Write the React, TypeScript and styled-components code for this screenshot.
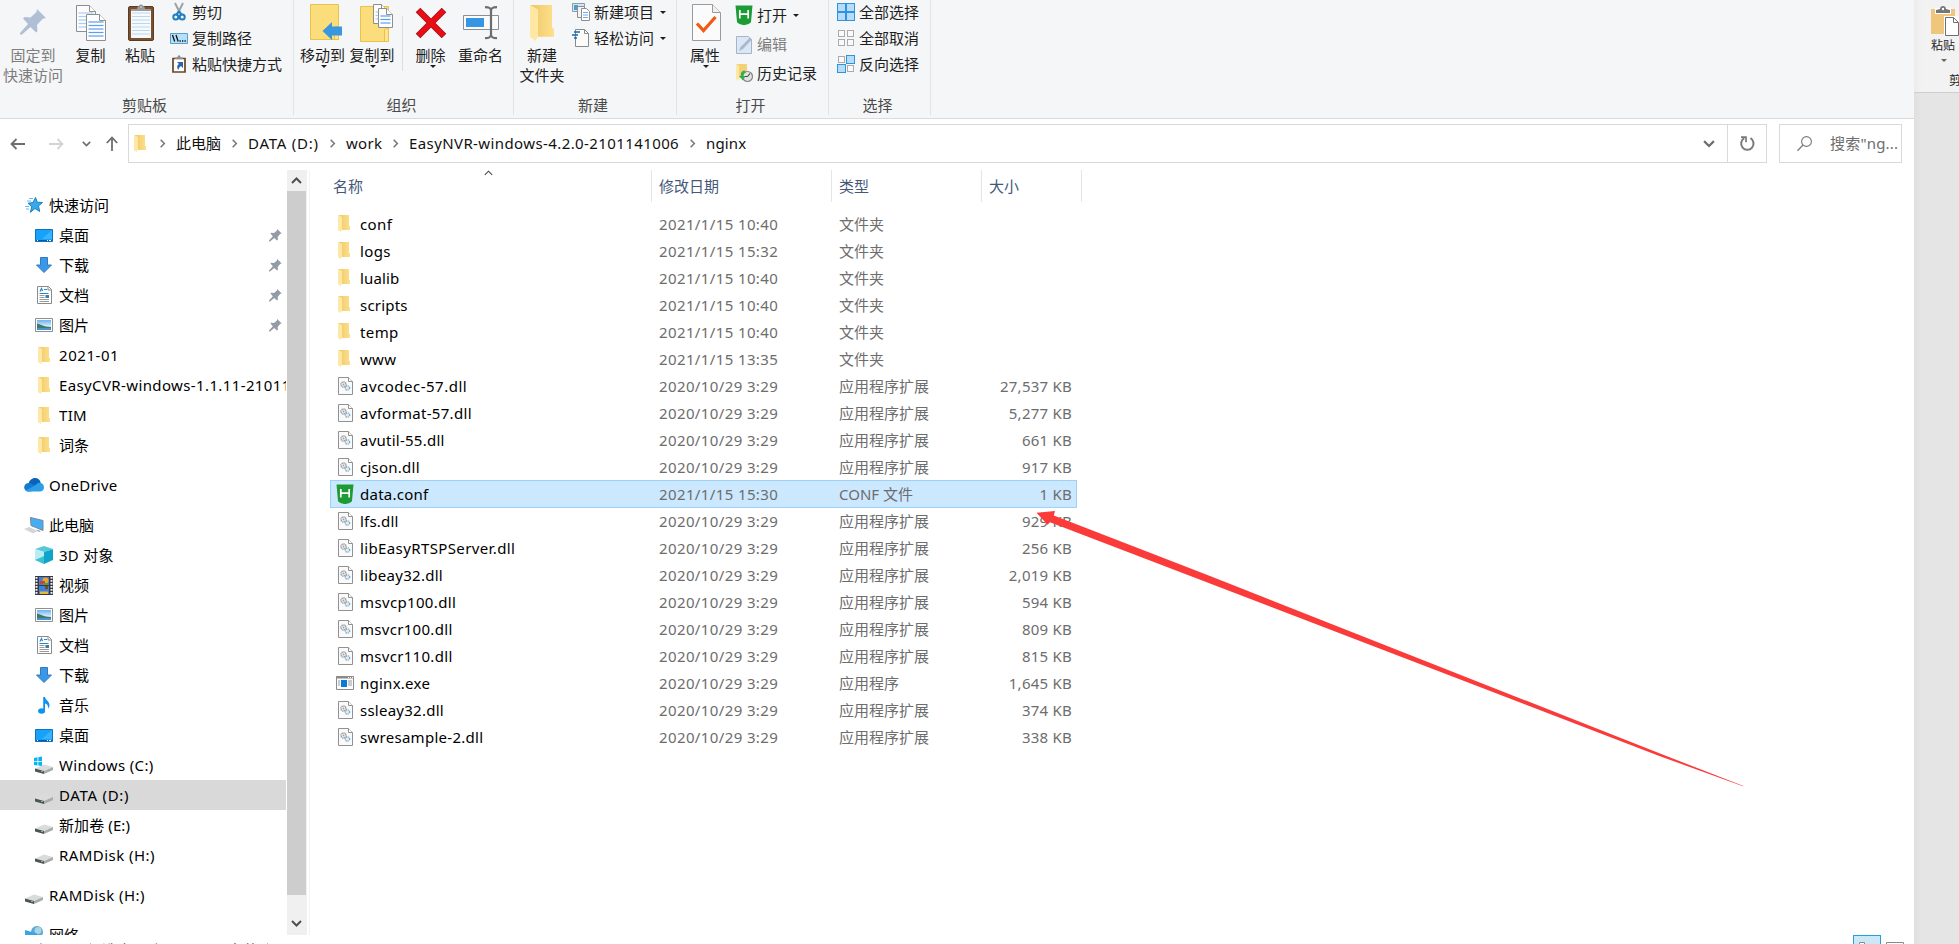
import React from 'react';
import styled, { createGlobalStyle } from 'styled-components';

const GlobalStyle = createGlobalStyle`
  *, *::before, *::after { box-sizing: border-box; }
  body { margin: 0; overflow: hidden; background: #fff; }
  svg { display: block; flex: none; overflow: visible; }
`;

const Screen = styled.div`
  position: relative;
  display: flex;
  width: 1959px;
  height: 944px;
  overflow: hidden;
  font-family: 'Noto Sans', 'Noto Sans CJK SC', sans-serif;
  font-size: 15px;
  line-height: 20px;
  color: #000;
  white-space: nowrap;
`;

const Explorer = styled.div`
  display: flex;
  flex-direction: column;
  width: 1914px;
  height: 944px;
  background: #fff;
  overflow: hidden;
`;

/* ---------- ribbon ---------- */

const Ribbon = styled.div`
  display: flex;
  flex: none;
  height: 119px;
  background: #f5f6f7;
  border-bottom: 1px solid #dadbdc;
`;

const Group = styled.div<{ $w: number }>`
  display: flex;
  flex-direction: column;
  width: ${(p) => p.$w}px;
  height: 115px;
  border-right: 1px solid #e2e3e4;
`;

const GroupBody = styled.div<{ $pad: number }>`
  display: flex;
  height: 95px;
  padding-left: ${(p) => p.$pad}px;
`;

const GroupLabel = styled.div`
  height: 20px;
  padding-right: 4px;
  text-align: center;
  color: #4a4a4a;
`;

const BigButton = styled.div<{ $w: number; $disabled?: boolean }>`
  display: flex;
  flex-direction: column;
  align-items: center;
  flex: none;
  width: ${(p) => p.$w}px;
  color: ${(p) => (p.$disabled ? '#7d7d7d' : '#1e1e1e')};
  text-align: center;
`;

const BigIcon = styled.div<{ $shift?: number }>`
  display: flex;
  align-items: center;
  justify-content: center;
  height: 45px;
  padding-left: ${(p) => p.$shift ?? 0}px;
`;

const SmallColumn = styled.div<{ $ml: number; $top?: number; $gap?: number }>`
  display: flex;
  flex-direction: column;
  gap: ${(p) => p.$gap ?? 6}px;
  margin-left: ${(p) => p.$ml}px;
  padding-top: ${(p) => p.$top ?? 2}px;
`;

const SmallButton = styled.div<{ $disabled?: boolean }>`
  display: flex;
  align-items: center;
  gap: 4px;
  height: 20px;
  color: ${(p) => (p.$disabled ? '#7d7d7d' : '#1e1e1e')};
`;

const Caret = styled.i<{ $ml?: number; $mt?: number; $small?: boolean }>`
  width: 0;
  height: 0;
  margin-left: ${(p) => p.$ml ?? 0}px;
  margin-top: ${(p) => p.$mt ?? 0}px;
  border: 3px solid transparent;
  border-top-color: ${(p) => (p.$small ? '#666' : '#1e1e1e')};
  border-bottom: 0;
`;

const Divider = styled.div`
  width: 1px;
  height: 55px;
  margin-top: 16px;
  background: #dcdddd;
`;

/* ---------- address bar ---------- */

const NavBar = styled.div`
  display: flex;
  flex: none;
  height: 51px;
  padding: 5px 12px 7px 0;
`;

const NavButtons = styled.div`
  display: flex;
  align-items: center;
  width: 128px;
  padding-left: 10px;
`;

const AddressBox = styled.div`
  display: flex;
  align-items: center;
  width: 1639px;
  border: 1px solid #d9d9d9;
  padding-left: 5px;
`;

const Crumb = styled.span<{ $w: number; $ls: number }>`
  width: ${(p) => p.$w}px;
  margin: 0 11px 2px;
  color: #111;
  letter-spacing: ${(p) => p.$ls}px;
`;

const AddressEnd = styled.div`
  display: flex;
  align-items: center;
  height: 37px;
  margin-left: auto;
`;

const RefreshCell = styled.div`
  display: flex;
  align-items: center;
  justify-content: center;
  width: 39px;
  height: 37px;
  margin-left: 12px;
  border-left: 1px solid #d9d9d9;
`;

const SearchBox = styled.div`
  display: flex;
  align-items: center;
  gap: 18px;
  width: 123px;
  margin-left: 12px;
  padding: 0 0 1px 17px;
  border: 1px solid #d9d9d9;
  color: #6d6d6d;
  letter-spacing: 0.2px;
`;

/* ---------- body ---------- */

const Body = styled.div`
  display: flex;
  flex: none;
  height: 765px;
`;

const Sidebar = styled.div`
  width: 286px;
  height: 765px;
  padding-top: 20px;
  overflow: hidden;
`;

const TreeSection = styled.div`
  margin-bottom: 10px;
`;

const TreeRow = styled.div<{ $root?: boolean; $selected?: boolean }>`
  display: flex;
  align-items: center;
  height: 30px;
  padding-left: ${(p) => (p.$root ? 23 : 33)}px;
  background: ${(p) => (p.$selected ? '#d9d9d9' : 'transparent')};
`;

const TreeIcon = styled.span`
  display: flex;
  justify-content: center;
  flex: none;
  width: 22px;
  margin-right: 4px;
`;

const TreeLabel = styled.span<{ $ls?: number }>`
  flex: 1;
  overflow: hidden;
  margin-bottom: 1px;
  letter-spacing: ${(p) => p.$ls ?? 0}px;
`;

const PinSlot = styled.span`
  flex: none;
  margin-right: 4px;
`;

const Scrollbar = styled.div`
  display: flex;
  flex-direction: column;
  width: 20px;
  margin-left: 1px;
  background: #f0f0f0;
`;

const ScrollButton = styled.div<{ $h: number; $top?: number }>`
  display: flex;
  align-items: center;
  justify-content: center;
  flex: none;
  width: 19px;
  height: ${(p) => p.$h}px;
  padding-top: ${(p) => p.$top ?? 0}px;
`;

const Thumb = styled.div`
  flex: none;
  width: 19px;
  height: 704px;
  background: #cdcdcd;
`;

const Files = styled.div`
  flex: 1;
  margin-left: 2px;
  padding-left: 20px;
  border-left: 1px solid #f2f2f2;
`;

const HeaderRow = styled.div`
  display: flex;
  height: 32px;
  margin-bottom: 8px;
  color: #44597a;
`;

const HeaderCell = styled.div<{ $w: number; $pad?: number }>`
  position: relative;
  width: ${(p) => p.$w}px;
  padding: 6px 0 0 ${(p) => p.$pad ?? 7}px;
  border-right: 1px solid #e5e5e5;
`;

const SortMark = styled.span`
  position: absolute;
  top: 0;
  left: 154px;
`;

const FileRow = styled.div<{ $selected?: boolean }>`
  display: flex;
  align-items: center;
  width: 747px;
  height: ${(p) => (p.$selected ? 28 : 27)}px;
  margin-bottom: ${(p) => (p.$selected ? -1 : 0)}px;
  padding-bottom: ${(p) => (p.$selected ? 1 : 0)}px;
  background: ${(p) => (p.$selected ? '#cce8ff' : 'transparent')};
  box-shadow: ${(p) => (p.$selected ? 'inset 0 0 0 1px #99d1ff' : 'none')};
  color: #6d6d6d;
`;

const FileIcon = styled.span<{ $narrow: boolean }>`
  flex: none;
  width: 18px;
  margin: 0 6px;
  padding-left: ${(p) => (p.$narrow ? 2 : 0)}px;
`;

const FileName = styled.span<{ $ls: number }>`
  width: 299px;
  color: #000;
  letter-spacing: ${(p) => p.$ls}px;
`;

const FileDate = styled.span`
  width: 180px;
  letter-spacing: 0.38px;
`;

const FileType = styled.span`
  width: 130px;
`;

const FileSize = styled.span`
  width: 103px;
  text-align: right;
  letter-spacing: 0.24px;
`;

/* ---------- status bar ---------- */

const StatusBar = styled.div`
  display: flex;
  flex: none;
  align-items: flex-start;
  height: 9px;
  overflow: hidden;
  color: #1e395b;
`;

const StatusText = styled.span<{ $ml: number; $w: number }>`
  width: ${(p) => p.$w}px;
  margin: 5px 0 0 ${(p) => p.$ml}px;
`;

const StatusSep = styled.span`
  width: 1px;
  height: 9px;
  margin-top: 8px;
  background: #b8c0c8;
`;

const ViewButton = styled.div<{ $active?: boolean }>`
  display: flex;
  justify-content: center;
  width: 28px;
  height: 20px;
  border: ${(p) => (p.$active ? '1px solid #26a0da' : '0')};
  background: ${(p) => (p.$active ? '#cce8f6' : 'transparent')};
  padding-top: ${(p) => (p.$active ? 6 : 7)}px;
`;

const ViewButtons = styled.div`
  display: flex;
  margin-left: auto;
  padding-right: 5px;
`;

/* ---------- second window at the right edge ---------- */

const OtherWindow = styled.div`
  width: 45px;
  height: 944px;
  background: linear-gradient(90deg, #e0e0e0, #e5e5e5 8px);
  overflow: hidden;
`;

const OtherRibbon = styled.div`
  display: flex;
  flex-direction: column;
  height: 93px;
  padding: 6px 0 0 17px;
  border-bottom: 1px solid #cfcfcf;
  background: linear-gradient(90deg, #ececec, #f2f2f2 8px);
  font-size: 12px;
  line-height: 16px;
  color: #262626;
`;

const OtherLabel = styled.span<{ $mt: number; $ml?: number }>`
  margin: ${(p) => p.$mt}px 0 0 ${(p) => p.$ml ?? 0}px;
`;

const ArrowOverlay = styled.svg`
  position: absolute;
  top: 500px;
  left: 1020px;
  pointer-events: none;
`;

/* ---------- icons ---------- */

const FolderIcon = ({ w = 12, h = 17 }: { w?: number; h?: number }) => (
  <svg width={w} height={h} viewBox="0 0 12 17" preserveAspectRatio="none">
    <defs>
      <linearGradient id="fold" x1="0" x2="1">
        <stop offset="0" stopColor="#efc768" />
        <stop offset="1" stopColor="#fde08a" />
      </linearGradient>
    </defs>
    <path d="M0 0h11v11h1v4H3V2L0 0z" fill="url(#fold)" />
    <path d="M0 0l3.3 1.8c.5.3.7.7.7 1.2V15l-1.4 2L0 15z" fill="#ffe8a3" />
  </svg>
);

const BigFolder = () => (
  <>
    <path d="M.5.5h28v35H.5z" fill="#fbdd7c" stroke="#e9c14d" />
    <path d="M24.5 35.500v-11.500c0-2 4-2 4 0v11.500z" fill="#ffe48f" stroke="#e9c14d" />
  </>
);

const BluePage = ({ x = 0, y = 0, w = 20, h = 27, light = false }: { x?: number; y?: number; w?: number; h?: number; light?: boolean }) => {
  const lines: number[] = [];
  for (let ly = 8; ly < h - 2; ly += 3.5) lines.push(ly);
  return (
    <g transform={`translate(${x} ${y})`}>
      <path d={`M.5.5H${w - 6.5}L${w - 0.5} 6.5V${h - 0.5}H.5z`} fill="#fdfdfe" stroke="#8e8e8e" />
      <path d={`M${w - 6.5}.5v6h6`} fill="#fff" stroke="#8e8e8e" />
      {lines.map((ly) => (
        <path key={ly} d={`M2.5 ${ly}H${w - 2.5}`} stroke={light ? '#a9cdf5' : '#5c9ff0'} strokeWidth="1.2" />
      ))}
    </g>
  );
};

const BigPin = () => (
  <svg width="27" height="27" viewBox="0 0 27 27">
    <path d="M17 0L26 9l-2.500.5-1 .5-5.500 6 .5 6-1.500 1.500-5.500-5.500L2 25.500H0V24l8-9L3 9.500 4.500 8l6 .5 6-5.500z" fill="#b1bfd4" />
  </svg>
);

const SmallPin = () => (
  <svg width="13" height="13" viewBox="0 0 27 27">
    <path d="M17 0L26.500 9.500l-2.500.5-1 .5-5 6 .5 6-2 1.500-5.500-5.500L2 26H0V24l8-9L3 9.500 4.500 8l6 .5 6-5.500z" fill="#929ba6" />
  </svg>
);

const CopyIcon = () => (
  <svg width="30" height="36">
    <BluePage light />
    <BluePage x={10} y={9} />
  </svg>
);

const PasteIcon = () => (
  <svg width="26" height="37" viewBox="0 0 26 37">
    <rect x=".5" y="2.5" width="25" height="34" rx="1.5" fill="#795130" stroke="#5d3b20" />
    <path d="M3 6h20v28H3z" fill="#f7fafd" />
    <path d="M4 9h18M4 12.500h18M4 16h18M4 19.500h18M4 23h18M4 26.500h18M4 30h18" stroke="#bcd6ec" />
    <path d="M3 7V5h6c0-5 8-5 8 0h6v2z" fill="#9b9b9b" />
    <circle cx="13" cy="2.5" r="2" fill="#8c8c8c" />
    <circle cx="13" cy="3" r=".8" fill="#fff" />
  </svg>
);

const CutIcon = () => (
  <svg width="18" height="18" viewBox="0 0 18 18">
    <path d="M5 0l5.500 11M13 0L7.500 11" stroke="#9ba3aa" strokeWidth="2" fill="none" />
    <path d="M9 8l-3 4M9 8l3 4" stroke="#1c7fc0" strokeWidth="1.8" />
    <circle cx="5.8" cy="14" r="2.5" fill="none" stroke="#1c7fc0" strokeWidth="2" />
    <circle cx="12.2" cy="14" r="2.5" fill="none" stroke="#1c7fc0" strokeWidth="2" />
  </svg>
);

const PathIcon = () => (
  <svg width="18" height="11" viewBox="0 0 18 11">
    <path d="M.5.5h17v10H.5z" fill="#b3e0fb" stroke="#5f9dc5" />
    <path d="M2.500 2l2.200 6.500M6 2l2.200 6.500" stroke="#111" strokeWidth="1.3" />
    <path d="M9.500 8h1.300M12 8h1.300M14.500 8h1.300" stroke="#111" strokeWidth="1.3" />
  </svg>
);

const ShortcutIcon = () => (
  <svg width="18" height="18" viewBox="0 0 18 18">
    <path d="M3 3.500h12v13.500H3z" fill="#fff" stroke="#6b4526" strokeWidth="1.7" />
    <path d="M5 4V2.500h2.500c0-3 3-3 3 0H13V4z" fill="#8c8c8c" />
    <path d="M7 7h6v6l-2-2c-1.500 1-2.500 2-2.500 4-2-2-1.500-5 .5-6z" fill="#2b62ac" />
  </svg>
);

const MoveToIcon = () => (
  <svg width="32" height="37">
    <BigFolder />
    <path d="M12.500 27l9.500-9v4.500h10v9H22V36z" fill="#3a96dd" />
  </svg>
);

const CopyToIcon = () => (
  <svg width="34" height="38">
    <g transform="translate(0 2)"><BigFolder /></g>
    <BluePage x={13} y={0} w={15} h={20} light />
    <BluePage x={18} y={4} w={15} h={20} />
  </svg>
);

const DeleteIcon = () => (
  <svg width="32" height="32" viewBox="0 0 32 32">
    <path d="M3 3l26 26M29 3L3 29" stroke="#a01219" strokeWidth="6.5" />
    <path d="M3.500 3.500l25 25M28.500 3.500l-25 25" stroke="#e80c14" strokeWidth="5" />
  </svg>
);

const RenameIcon = () => (
  <svg width="36" height="34" viewBox="0 0 36 34">
    <path d="M.5 9.500h35v14H.5z" fill="#fbfbfb" stroke="#8b8f95" />
    <path d="M3 12h18v9H3z" fill="#3596e4" />
    <path d="M22 1.200c4 0 6 .5 6 4v23c0 3.500-2 4-6 4M34 1.200c-4 0-6 .5-6 4v23c0 3.500 2 4 6 4" fill="none" stroke="#6e6e6e" strokeWidth="2.2" />
  </svg>
);

const NewItemIcon = () => (
  <svg width="18" height="18" viewBox="0 0 18 18">
    <path d="M.5.5h12v8H.5z" fill="#cde9f7" stroke="#8f9ba5" />
    <path d="M2 2h4v5H2z" fill="#4b9fd0" />
    <path d="M5.500 3.500h7v11h-7z" fill="#f4f4f4" stroke="#8e8e8e" />
    <path d="M9.500 5.500h5l3 3v9h-8z" fill="#fff" stroke="#8e8e8e" />
    <path d="M11 9.500h5M11 12h5M11 14.500h5" stroke="#6faaf0" />
  </svg>
);

const EasyAccessIcon = () => (
  <svg width="18" height="18" viewBox="0 0 18 18">
    <path d="M3.500.5h9l4 4v13h-13z" fill="#fcfcfc" stroke="#8a8a8a" />
    <path d="M12.500.5v4h4" fill="none" stroke="#8a8a8a" />
    <path d="M2 3h6M0 6h6M2 9h3" stroke="#1566b0" strokeWidth="1.7" />
  </svg>
);

const PropertiesIcon = () => (
  <svg width="29" height="37" viewBox="0 0 29 37">
    <path d="M.5.5h20l8 8v28H.5z" fill="#fbfbfc" stroke="#9a9a9a" />
    <path d="M20.500.5v8h8" fill="#f0f0f0" stroke="#9a9a9a" />
    <path d="M5 19.500l6.500 7L23.500 13" stroke="#f05a12" strokeWidth="3.2" fill="none" />
  </svg>
);

const HBuilderIcon = () => (
  <svg width="18" height="20" viewBox="0 0 18 20">
    <path d="M.5.5h17L16 17c-1 2-5 3-7 3s-6-1-7-3z" fill="#1d9b35" />
    <path d="M4.800 5v8.500M13.200 5v8.500M4.800 9.200h8.400" stroke="#fff" strokeWidth="1.7" />
  </svg>
);

const EditIcon = () => (
  <svg width="18" height="19" viewBox="0 0 18 19">
    <path d="M1.500 1.500h12l3 3v14h-15z" fill="#dde6f3" stroke="#a3b4d0" />
    <path d="M4 16l1.500-4L15 2.500l2 2L8 14z" fill="#a9b9d4" />
  </svg>
);

const HistoryIcon = () => (
  <svg width="18" height="18" viewBox="0 0 18 18">
    <path d="M1 0h11v14H4V2z" fill="#f4d176" />
    <path d="M1 0l3 2v13l-1.500 2L1 15z" fill="#ffe8a3" />
    <circle cx="12.5" cy="12.5" r="5" fill="#e3e3e3" stroke="#858585" strokeWidth="1.2" />
    <path d="M12.500 12.500l2.500-3M12.500 12.500h-2.500" stroke="#444" strokeWidth="1.1" />
    <path d="M9.500 6.500C6 7 5.500 10 6 12H4l4 4.500 2.500-4.500H8.500c-.3-2 .5-3 2.500-3.500z" fill="#31b04a" />
  </svg>
);

const SelectIcon = ({ on }: { on: boolean[] }) => (
  <svg width="18" height="18" viewBox="0 0 18 18">
    {on.map((active, i) => {
      const size = active ? 8 : 6;
      const x = (i % 2) * 9 + (active ? 0.5 : 1.5);
      const y = Math.floor(i / 2) * 9 + (active ? 0.5 : 1.5);
      return (
        <rect key={i} x={x} y={y} width={size} height={size} fill={active ? '#b6dcfa' : '#fafafa'} stroke={active ? '#2f93e0' : '#ababab'} />
      );
    })}
  </svg>
);

const Chevron = () => (
  <svg width="5" height="9" viewBox="0 0 5 9">
    <path d="M.7.7L4.300 4.500.7 8.300" fill="none" stroke="#7a7a7a" strokeWidth="1.6" />
  </svg>
);

const DownChevron = ({ w = 11, color = '#6e6e6e', up = false, sw = 2 }: { w?: number; color?: string; up?: boolean; sw?: number }) => (
  <svg width={w} height={w * 0.64} viewBox="0 0 11 7">
    <path d={up ? 'M1 6l4.500-4.500L10 6' : 'M1 1l4.500 4.500L10 1'} fill="none" stroke={color} strokeWidth={sw} />
  </svg>
);

const BackArrow = () => (
  <svg width="15" height="12" viewBox="0 0 15 12">
    <path d="M15 6H1.500M6.500 1l-5 5 5 5" fill="none" stroke="#6e6e6e" strokeWidth="1.8" />
  </svg>
);

const ForwardArrow = () => (
  <svg width="15" height="12" viewBox="0 0 15 12">
    <path d="M0 6h13.500M8.500 1l5 5-5 5" fill="none" stroke="#d4d4d4" strokeWidth="1.8" />
  </svg>
);

const UpArrow = () => (
  <svg width="12" height="15" viewBox="0 0 12 15">
    <path d="M6 15V1.500M.8 7L6 1.500 11.200 7" fill="none" stroke="#6e6e6e" strokeWidth="1.8" />
  </svg>
);

const Spacer = styled.span<{ $w: number }>`
  flex: none;
  width: ${(p) => p.$w}px;
`;

const RefreshIcon = () => (
  <svg width="15" height="15" viewBox="0 0 15 15">
    <path d="M10.500 2.200A6.200 6.200 0 1 1 4.200 2.200" fill="none" stroke="#7a7a7a" strokeWidth="2" />
    <path d="M1 1.200h5v5" fill="none" stroke="#7a7a7a" strokeWidth="1.7" />
  </svg>
);

const SearchIcon = () => (
  <svg width="15" height="15" viewBox="0 0 15 15">
    <circle cx="9.5" cy="5.5" r="4.9" fill="none" stroke="#7a7a7a" strokeWidth="1.1" />
    <path d="M6 9L.5 14.700" stroke="#7a7a7a" strokeWidth="1.3" />
  </svg>
);

const StarIcon = () => (
  <svg width="18" height="16" viewBox="0 0 18 16">
    <path d="M10.500.5l1.800 4.700 5.200.3-4 3.400 1.200 5.600-4.700-3-4.600 3.800 1.400-5.500L3 6.200l5-.6z" fill="#38a8ec" stroke="#1d7fc2" />
    <path d="M4 1.500h4M2 4h4M0 9.500h4M1 12h3" stroke="#62bff2" />
  </svg>
);

const DesktopIcon = () => (
  <svg width="18" height="13" viewBox="0 0 18 13">
    <path d="M.5.5h17v12H.5z" fill="#17a2fa" stroke="#0b72c4" />
    <path d="M17 1v9L7 10z" fill="#3cb2ff" />
    <path d="M1 11.500h16" stroke="#085a9e" />
    <path d="M2 11.500h1M12 11.500h1M14 11.500h2" stroke="#fff" />
  </svg>
);

const DownloadIcon = () => (
  <svg width="16" height="16" viewBox="0 0 16 16">
    <path d="M4.500.5h7v7.500h4L8 15.500.5 8h4z" fill="#3c98e6" stroke="#2b7cc4" />
  </svg>
);

const DocumentIcon = () => (
  <svg width="15" height="18" viewBox="0 0 15 18">
    <path d="M.5.5h11l3 3v14H.5z" fill="#fff" stroke="#8b8b8b" />
    <path d="M11 .5v3.500h3.500" fill="none" stroke="#8b8b8b" />
    <path d="M3 5.500l1.500-3L5.500 5M7 3.500h3M2.500 7.500h9" stroke="#2a85cf" strokeWidth="1.2" fill="none" />
    <path d="M2.500 9.500h5M2.500 11.500h5M2.500 13.500h9.500M2.500 15.500h9.500" stroke="#9c9c9c" />
    <path d="M8.500 9h3.500v3H8.500z" fill="#377fa8" />
  </svg>
);

const PictureIcon = () => (
  <svg width="18" height="14" viewBox="0 0 18 14">
    <defs>
      <linearGradient id="sky" x1="0" y1="0" x2="0" y2="1">
        <stop offset="0" stopColor="#6fb1ee" />
        <stop offset="1" stopColor="#e3f4fc" />
      </linearGradient>
    </defs>
    <path d="M.5.5h17v13H.5z" fill="#fff" stroke="#8f8f8f" />
    <path d="M2 2h14v7H2z" fill="url(#sky)" />
    <path d="M2 5.500c2 0 5 2.500 9 3l5 .5V11H2z" fill="#3d7a6c" />
    <path d="M2 10h14v2H2z" fill="#4a93cc" />
  </svg>
);

const OneDriveIcon = () => (
  <svg width="20" height="14" viewBox="0 0 20 14">
    <path d="M4.500 6C5 2.500 8 0 11 0c3 0 5 2 5.700 4.500L12 8 5 9z" fill="#0a63b8" />
    <path d="M4.700 13.500C-1 13.500-1.500 5.500 4.500 5c3-.3 4.500 1.500 6.500 2.500l-4 6z" fill="#1479d0" />
    <path d="M10 8l4-3c4-1 6 2 6 4.500s-2 4-4 4H4.500c-1.500 0-2.500-.4-3-1z" fill="#2a9fe8" />
  </svg>
);

const ThisPcIcon = () => (
  <svg width="20" height="17" viewBox="0 0 20 17">
    <path d="M6.500.5l12.500 3v10L7 8.500z" fill="#43aef5" stroke="#7f868d" />
    <path d="M0 12l5-2 9 4-5 2.500z" fill="#d3d6d9" />
    <path d="M12 12.500l5 1.500-2 1z" fill="#9a9fa4" />
  </svg>
);

const CubeIcon = () => (
  <svg width="18" height="18" viewBox="0 0 18 18">
    <path d="M0 3l9-3 9 3-9 3z" fill="#55c9d8" />
    <path d="M0 3l9 3v12l-9-4z" fill="#b9edf1" />
    <path d="M18 3L9 6v12l9-4z" fill="#10a4cc" />
    <path d="M0 14l9-4v8z" fill="#3cc1d0" />
  </svg>
);

const VideoIcon = () => (
  <svg width="18" height="19" viewBox="0 0 18 19">
    <path d="M0 0h18v19H0z" fill="#3a3a3a" />
    <path d="M1.500 1v18M16.500 1v18" stroke="#f2f2f2" strokeWidth="2" strokeDasharray="1.800 1.200" />
    <path d="M4 1h10v8H4zM4 10h10v8H4z" fill="#3e7fe0" />
    <circle cx="10.5" cy="4.5" r="3" fill="#e9a52c" />
    <path d="M5 5h5v3H5z" fill="#c9403e" />
    <path d="M8 7h5v2H8z" fill="#4aa04a" />
    <path d="M10 10h3v3h-3z" fill="#7a4a24" />
    <path d="M5 15.500h8V18H5z" fill="#e5b93a" />
  </svg>
);

const MusicIcon = () => (
  <svg width="12" height="17" viewBox="0 0 12 17">
    <ellipse cx="3.6" cy="14" rx="3.5" ry="2.8" fill="#0f93ee" />
    <path d="M5.200 14V0h1.800c.3 3 4.500 4 4.500 8 0 1.500-.6 2.800-1.500 3.500.5-3-1-4.500-3-5V14z" fill="#0f93ee" />
  </svg>
);

const DriveIcon = ({ win = false }: { win?: boolean }) => (
  <svg width="18" height="17" viewBox="0 0 18 17">
    <path d="M0 11.500L9 7.500l9 2.500-9 4z" fill="#d9dbdc" />
    <path d="M0 11.500l9 2.500v3l-9-2.500z" fill="#4f5351" />
    <path d="M9 14l9-4v3l-9 4z" fill="#a9abac" />
    <path d="M6 14.500h2" stroke="#5fd06a" />
    {win && <path d="M-1 1l3.500-.7V4H-1zM3.300.2L7-.5V4H3.300zM-1 4.800h3.500v3.700L-1 8zM3.300 4.800H7V9l-3.700-.5z" fill="#08b4ef" />}
  </svg>
);

const NetworkIcon = () => (
  <svg width="18" height="18" viewBox="0 0 18 18">
    <circle cx="12" cy="6" r="6" fill="#5aa7cf" />
    <circle cx="13" cy="4.5" r="3.5" fill="#a8d5e8" />
    <path d="M0 4l12 3.500V18L0 12z" fill="#3ba5e0" />
  </svg>
);

const DllIcon = () => (
  <svg width="15" height="18" viewBox="0 0 15 18">
    <path d="M.5.5h10l4 4v13H.5z" fill="#fafafa" stroke="#919191" />
    <path d="M10.500.5v4h4" fill="#fff" stroke="#919191" />
    <circle cx="5.5" cy="7.5" r="2.5" fill="none" stroke="#8b9096" strokeWidth="1.5" strokeDasharray="1.2 .7" />
    <circle cx="5.5" cy="7.5" r="1" fill="#9aa0a6" />
    <circle cx="9.5" cy="11" r="2.2" fill="#dcedf6" stroke="#7fa9c2" strokeWidth="1.3" strokeDasharray="1.2 .7" />
  </svg>
);

const ExeIcon = () => (
  <svg width="18" height="14" viewBox="0 0 18 14">
    <path d="M.5.5h17v13H.5z" fill="#fdfdfd" stroke="#8a8a8a" />
    <path d="M0 1.500h18" stroke="#8a8a8a" strokeWidth="2" />
    <path d="M12 1.500h1M14 1.500h1M16 1.500h1" stroke="#fff" />
    <path d="M5 4h6v7H5z" fill="#0a7bd8" />
    <path d="M2 5h2M2 7h2M2 9h2M12 5h4M12 7h4M12 9h4" stroke="#9b9b9b" />
  </svg>
);

const OtherPasteIcon = () => (
  <svg width="28" height="31" viewBox="0 0 28 31">
    <path d="M0 3h24v25H0z" fill="#eec67c" />
    <path d="M4 2h16v6H4z" fill="#fff" />
    <path d="M5 7V4l4-1C9-1 15-1 15 3l4 1v3z" fill="#767676" />
    <circle cx="12" cy="3" r="1.2" fill="#fff" />
    <path d="M13 10h15v20H13z" fill="#fff" />
    <path d="M14.500 11.500h8l5 5v13h-13z" fill="#fff" stroke="#6f6f6f" />
    <path d="M22.500 11.500v5h5" fill="none" stroke="#6f6f6f" />
  </svg>
);

/* ---------- data ---------- */

type TreeItem = { label: string; icon: React.ReactNode; root?: boolean; pin?: boolean; selected?: boolean; ls?: number };

const tree: TreeItem[][] = [
  [
    { label: '快速访问', icon: <StarIcon />, root: true },
    { label: '桌面', icon: <DesktopIcon />, pin: true },
    { label: '下载', icon: <DownloadIcon />, pin: true },
    { label: '文档', icon: <DocumentIcon />, pin: true },
    { label: '图片', icon: <PictureIcon />, pin: true },
    { label: '2021-01', icon: <FolderIcon />, ls: 0.55 },
    { label: 'EasyCVR-windows-1.1.11-2101141006', icon: <FolderIcon />, ls: 0.38 },
    { label: 'TIM', icon: <FolderIcon />, ls: 0.3 },
    { label: '词条', icon: <FolderIcon /> },
  ],
  [{ label: 'OneDrive', icon: <OneDriveIcon />, root: true, ls: 0.25 }],
  [
    { label: '此电脑', icon: <ThisPcIcon />, root: true },
    { label: '3D 对象', icon: <CubeIcon />, ls: 0.25 },
    { label: '视频', icon: <VideoIcon /> },
    { label: '图片', icon: <PictureIcon /> },
    { label: '文档', icon: <DocumentIcon /> },
    { label: '下载', icon: <DownloadIcon /> },
    { label: '音乐', icon: <MusicIcon /> },
    { label: '桌面', icon: <DesktopIcon /> },
    { label: 'Windows (C:)', icon: <DriveIcon win />, ls: 0.35 },
    { label: 'DATA (D:)', icon: <DriveIcon />, selected: true, ls: 0.7 },
    { label: '新加卷 (E:)', icon: <DriveIcon />, ls: 0.1 },
    { label: 'RAMDisk (H:)', icon: <DriveIcon />, ls: 0.45 },
  ],
  [{ label: 'RAMDisk (H:)', icon: <DriveIcon />, root: true, ls: 0.45 }],
  [{ label: '网络', icon: <NetworkIcon />, root: true }],
];

const DLL = '应用程序扩展';
const OLD = '2020/10/29 3:29';

const files: [string, string, string, string, number][] = [
  ['conf', '2021/1/15 10:40', '文件夹', '', 0.4],
  ['logs', '2021/1/15 15:32', '文件夹', '', 0.4],
  ['lualib', '2021/1/15 10:40', '文件夹', '', 0.15],
  ['scripts', '2021/1/15 10:40', '文件夹', '', 0.2],
  ['temp', '2021/1/15 10:40', '文件夹', '', 0.4],
  ['www', '2021/1/15 13:35', '文件夹', '', 0.3],
  ['avcodec-57.dll', OLD, DLL, '27,537 KB', 0.5],
  ['avformat-57.dll', OLD, DLL, '5,277 KB', 0.3],
  ['avutil-55.dll', OLD, DLL, '661 KB', 0.25],
  ['cjson.dll', OLD, DLL, '917 KB', 0.25],
  ['data.conf', '2021/1/15 15:30', 'CONF 文件', '1 KB', 0.25],
  ['lfs.dll', OLD, DLL, '929 KB', 0.2],
  ['libEasyRTSPServer.dll', OLD, DLL, '256 KB', 0.38],
  ['libeay32.dll', OLD, DLL, '2,019 KB', 0.28],
  ['msvcp100.dll', OLD, DLL, '594 KB', 0.35],
  ['msvcr100.dll', OLD, DLL, '809 KB', 0.3],
  ['msvcr110.dll', OLD, DLL, '815 KB', 0.3],
  ['nginx.exe', OLD, '应用程序', '1,645 KB', 0.25],
  ['ssleay32.dll', OLD, DLL, '374 KB', 0.25],
  ['swresample-2.dll', OLD, DLL, '338 KB', 0.28],
];

const fileIcon = (name: string, type: string) => {
  if (type === '文件夹') return <FolderIcon />;
  if (name.endsWith('.exe')) return <ExeIcon />;
  if (name.endsWith('.conf')) return <HBuilderIcon />;
  return <DllIcon />;
};

const crumbs: [string, number, number][] = [
  ['此电脑', 45, 0],
  ['DATA (D:)', 71, 0.75],
  ['work', 36, 0.3],
  ['EasyNVR-windows-4.2.0-2101141006', 270, 0.4],
  ['nginx', 42, 0.15],
];

export default function App() {
  return (
    <Screen lang="zh-CN">
      <GlobalStyle />
      <Explorer>
        <Ribbon>
          <Group $w={294}>
            <GroupBody $pad={0}>
              <BigButton $w={66} $disabled>
                <BigIcon><BigPin /></BigIcon>
                <span>固定到</span>
                <span>快速访问</span>
              </BigButton>
              <BigButton $w={49}>
                <BigIcon><CopyIcon /></BigIcon>
                <span>复制</span>
              </BigButton>
              <BigButton $w={50}>
                <BigIcon $shift={1}><PasteIcon /></BigIcon>
                <span>粘贴</span>
              </BigButton>
              <SmallColumn $ml={5}>
                <SmallButton><CutIcon />剪切</SmallButton>
                <SmallButton><PathIcon />复制路径</SmallButton>
                <SmallButton><ShortcutIcon />粘贴快捷方式</SmallButton>
              </SmallColumn>
            </GroupBody>
            <GroupLabel>剪贴板</GroupLabel>
          </Group>
          <Group $w={220}>
            <GroupBody $pad={4}>
              <BigButton $w={49}>
                <BigIcon $shift={6}><MoveToIcon /></BigIcon>
                <span>移动到</span>
                <Caret $ml={2} />
              </BigButton>
              <BigButton $w={50}>
                <BigIcon $shift={9}><CopyToIcon /></BigIcon>
                <span>复制到</span>
                <Caret $ml={2} />
              </BigButton>
              <Spacer $w={5} />
              <Divider />
              <BigButton $w={55}>
                <BigIcon><DeleteIcon /></BigIcon>
                <span>删除</span>
                <Caret $ml={4} />
              </BigButton>
              <BigButton $w={45}>
                <BigIcon><RenameIcon /></BigIcon>
                <span>重命名</span>
              </BigButton>
            </GroupBody>
            <GroupLabel>组织</GroupLabel>
          </Group>
          <Group $w={163}>
            <GroupBody $pad={3}>
              <BigButton $w={50}>
                <BigIcon><FolderIcon w={24} h={36} /></BigIcon>
                <span>新建</span>
                <span>文件夹</span>
              </BigButton>
              <SmallColumn $ml={5}>
                <SmallButton><NewItemIcon />新建项目<Caret $ml={2} /></SmallButton>
                <SmallButton><EasyAccessIcon />轻松访问<Caret $ml={2} /></SmallButton>
              </SmallColumn>
            </GroupBody>
            <GroupLabel>新建</GroupLabel>
          </Group>
          <Group $w={152}>
            <GroupBody $pad={2}>
              <BigButton $w={52}>
                <BigIcon $shift={2}><PropertiesIcon /></BigIcon>
                <span>属性</span>
                <Caret $ml={2} />
              </BigButton>
              <SmallColumn $ml={4} $top={5} $gap={9}>
                <SmallButton><HBuilderIcon />打开<Caret $ml={2} /></SmallButton>
                <SmallButton $disabled><EditIcon />编辑</SmallButton>
                <SmallButton><HistoryIcon />历史记录</SmallButton>
              </SmallColumn>
            </GroupBody>
            <GroupLabel>打开</GroupLabel>
          </Group>
          <Group $w={102}>
            <GroupBody $pad={0}>
              <SmallColumn $ml={8}>
                <SmallButton><SelectIcon on={[true, true, true, true]} />全部选择</SmallButton>
                <SmallButton><SelectIcon on={[false, false, false, false]} />全部取消</SmallButton>
                <SmallButton><SelectIcon on={[false, true, true, false]} />反向选择</SmallButton>
              </SmallColumn>
            </GroupBody>
            <GroupLabel>选择</GroupLabel>
          </Group>
        </Ribbon>

        <NavBar>
          <NavButtons>
            <BackArrow />
            <Spacer $w={24} />
            <ForwardArrow />
            <Spacer $w={18} />
            <DownChevron w={9} />
            <Spacer $w={15} />
            <UpArrow />
          </NavButtons>
          <AddressBox>
            <FolderIcon />
            <Spacer $w={14} />
            {crumbs.map(([label, width, spacing]) => (
              <React.Fragment key={label}>
                <Chevron />
                <Crumb $w={width} $ls={spacing}>{label}</Crumb>
              </React.Fragment>
            ))}
            <AddressEnd>
              <DownChevron w={12} />
              <RefreshCell><RefreshIcon /></RefreshCell>
            </AddressEnd>
          </AddressBox>
          <SearchBox><SearchIcon />搜索"ng...</SearchBox>
        </NavBar>

        <Body>
          <Sidebar>
            {tree.map((section, i) => (
              <TreeSection key={i}>
                {section.map((item) => (
                  <TreeRow key={item.label} $root={item.root} $selected={item.selected}>
                    <TreeIcon>{item.icon}</TreeIcon>
                    <TreeLabel $ls={item.ls}>{item.label}</TreeLabel>
                    {item.pin && <PinSlot><SmallPin /></PinSlot>}
                  </TreeRow>
                ))}
              </TreeSection>
            ))}
          </Sidebar>
          <Scrollbar>
            <ScrollButton $h={21}><DownChevron w={11} color="#505050" up /></ScrollButton>
            <Thumb />
            <ScrollButton $h={40} $top={18}><DownChevron w={11} color="#505050" /></ScrollButton>
          </Scrollbar>
          <Files>
            <HeaderRow>
              <HeaderCell $w={322} $pad={3}>
                名称
                <SortMark><DownChevron w={9} color="#444" up sw={1.3} /></SortMark>
              </HeaderCell>
              <HeaderCell $w={180}>修改日期</HeaderCell>
              <HeaderCell $w={150}>类型</HeaderCell>
              <HeaderCell $w={100}>大小</HeaderCell>
            </HeaderRow>
            {files.map(([name, date, type, size, spacing]) => (
              <FileRow key={name} $selected={name === 'data.conf'}>
                <FileIcon $narrow={type === '文件夹' || type === DLL}>{fileIcon(name, type)}</FileIcon>
                <FileName $ls={spacing}>{name}</FileName>
                <FileDate>{date}</FileDate>
                <FileType>{type}</FileType>
                <FileSize>{size}</FileSize>
              </FileRow>
            ))}
          </Files>
        </Body>

        <StatusBar>
          <StatusText $ml={12} $w={78}>20 个项目</StatusText>
          <StatusSep />
          <StatusText $ml={11} $w={96}>选中 1 个项目</StatusText>
          <StatusText $ml={0} $w={69}>103 字节</StatusText>
          <StatusSep />
          <ViewButtons>
            <ViewButton $active>
              <svg width="16" height="10"><path d="M.5 9V.5h5V9" fill="#fff" stroke="#8a8a8a" /></svg>
            </ViewButton>
            <ViewButton>
              <svg width="18" height="10"><path d="M.5 9V.5h17V9" fill="#fff" stroke="#8a8a8a" /></svg>
            </ViewButton>
          </ViewButtons>
        </StatusBar>
      </Explorer>

      <OtherWindow>
        <OtherRibbon>
          <OtherPasteIcon />
          <OtherLabel $mt={1}>粘贴</OtherLabel>
          <Caret $ml={10} $mt={5} $small />
          <OtherLabel $mt={11} $ml={18}>剪贴板</OtherLabel>
        </OtherRibbon>
      </OtherWindow>

      <ArrowOverlay width="740" height="300" viewBox="1020 500 740 300">
        <path d="M1036.500 512.800L1055 511l-1.200 4.400L1210 576l450 177.500L1743.500 786l-.5.300L1658 755.500 1210 583.500 1050 522.200l-2.500 2.600z" fill="#fb3a3a" />
      </ArrowOverlay>
    </Screen>
  );
}
